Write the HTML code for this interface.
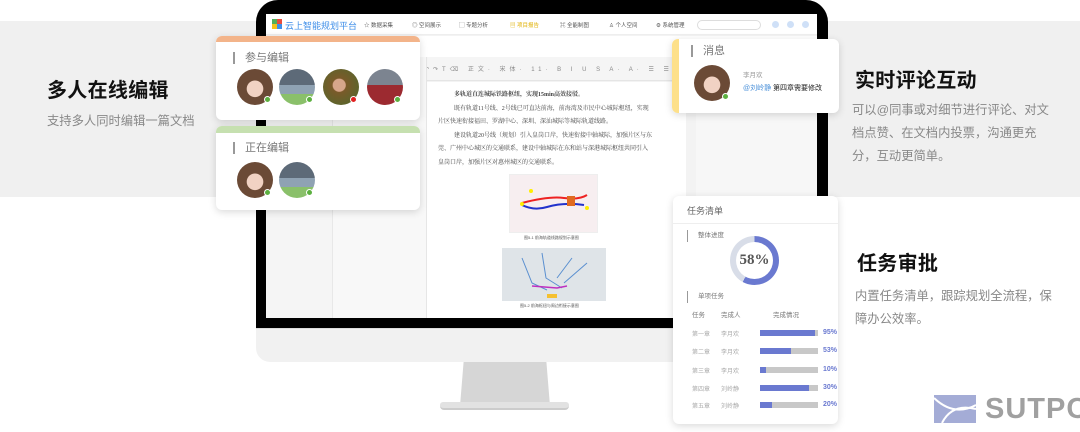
<!DOCTYPE html>
<html><head><meta charset="utf-8"><style>
*{margin:0;padding:0;box-sizing:border-box}
body{width:1080px;height:432px;background:#fff;position:relative;overflow:hidden;font-family:"Liberation Sans","Noto Sans CJK SC",sans-serif}
.abs{position:absolute}
.band{left:0;top:21px;width:1080px;height:176px;background:#f0f0f0}
h2{position:absolute;font-size:20px;font-weight:bold;color:#111;letter-spacing:0.3px;white-space:nowrap}
.p{position:absolute;font-size:12.3px;color:#888;line-height:23px;white-space:nowrap}
.card{position:absolute;background:#fff;border-radius:6px;box-shadow:0 2px 8px rgba(0,0,0,.15);overflow:hidden}
.ttl{position:absolute;font-size:11px;color:#777;padding-left:10px;border-left:2px solid #999;line-height:12px}
.av{position:absolute;width:36px;height:36px;border-radius:50%}
.dot{position:absolute;width:7px;height:7px;border-radius:50%;background:#5cb040;border:1px solid #fff}
.a1{background:radial-gradient(circle at 50% 55%,#f1d2c3 0 30%,#6b4a36 32% 100%)}
.a2{background:linear-gradient(#5d6a78 0 45%,#8fa2b3 45% 70%,#8ac06a 70%)}
.a3{background:radial-gradient(circle at 45% 45%,#d7a68b 0 22%,#7a5a2a 25%,#4c6a2c 100%)}
.a4{background:linear-gradient(#7c8490 0 45%,#9c2a30 45% 100%)}
.row{position:absolute;font-size:6px;color:#aaa}
.bar{position:absolute;height:6px;width:58px;background:#c8c8c8}
.bar i{display:block;height:100%;background:#6a79d0}
.pct{position:absolute;font-size:7px;color:#6a79d0;font-weight:bold}
.doc{position:absolute;font-size:6px;color:#444;line-height:13.5px;font-family:"Liberation Serif","Noto Serif CJK SC",serif;white-space:nowrap}
.nav{position:absolute;top:7px;font-size:5.5px;color:#555;white-space:nowrap}
</style></head><body>
<div class="abs band"></div>

<h2 style="left:47px;top:74px">多人在线编辑</h2>
<div class="p" style="left:47px;top:110px">支持多人同时编辑一篇文档</div>

<h2 style="left:855px;top:64px">实时评论互动</h2>
<div class="p" style="left:852px;top:99px">可以@同事或对细节进行评论、对文<br>档点赞、在文档内投票，沟通更充<br>分，互动更简单。</div>

<h2 style="left:857px;top:247px">任务审批</h2>
<div class="p" style="left:855px;top:285px">内置任务清单，跟踪规划全流程，保<br>障办公效率。</div>

<!-- monitor -->
<div class="abs" style="left:256px;top:0;width:572px;height:328px;background:#000;border-radius:22px 22px 0 0"></div>
<div class="abs" style="left:256px;top:328px;width:572px;height:34px;background:#f1f1f1;border-radius:0 0 14px 14px;border-top:1px solid #ddd"></div>
<div class="abs" style="left:460px;top:362px;width:90px;height:44px;background:#d6d6d6;clip-path:polygon(4% 0,96% 0,100% 100%,0 100%)"></div>
<div class="abs" style="left:440px;top:402px;width:129px;height:8px;background:#e2e2e2;border-radius:3px 3px 4px 4px;border-bottom:2px solid #ccc"></div>

<!-- screen -->
<div class="abs" style="left:266px;top:14px;width:551px;height:304px;background:#f3f3f3;overflow:hidden">
  <div class="abs" style="left:0;top:0;width:551px;height:21px;background:#fff;border-bottom:1px solid #eee"></div>
  <div class="abs" style="left:6px;top:5px;width:10px;height:10px;background:conic-gradient(#e94d3c 0 25%,#3e8ee8 0 50%,#f4c21a 0 75%,#51b05a 0)"></div>
  <div class="abs" style="left:19px;top:5px;font-size:9px;color:#3e8ee8;white-space:nowrap">云上智能规划平台</div>
  <div class="nav" style="left:98px">☆ 数据采集</div>
  <div class="nav" style="left:146px">◎ 空间展示</div>
  <div class="nav" style="left:193px">▢ 专题分析</div>
  <div class="nav" style="left:244px;color:#e0b000">▤ 项目报告</div>
  <div class="nav" style="left:294px">⌘ 全能制图</div>
  <div class="nav" style="left:343px">♙ 个人空间</div>
  <div class="nav" style="left:390px">⚙ 系统管理</div>
  <div class="abs" style="left:431px;top:6px;width:64px;height:10px;border:1px solid #ddd;border-radius:5px"></div>
  <div class="abs" style="left:506px;top:7px;width:7px;height:7px;border-radius:50%;background:#cfe0f7"></div>
  <div class="abs" style="left:521px;top:7px;width:7px;height:7px;border-radius:50%;background:#cfe0f7"></div>
  <div class="abs" style="left:536px;top:7px;width:7px;height:7px;border-radius:50%;background:#cfe0f7"></div>
  <div class="abs" style="left:0;top:22px;width:551px;height:21px;background:#fff"></div>
  <div class="abs" style="left:150px;top:43px;width:401px;height:24px;background:#f5f5f5;border-bottom:1px solid #e5e5e5;font-size:6px;color:#888;padding:7px 8px;white-space:nowrap;letter-spacing:4px">↶↷T⌫ 正文· 宋体· 11· B I U S A· A· ☰ ☰ ≡ ≡ ≡ ≡· 插入· 图</div>
  <div class="abs" style="left:0;top:43px;width:67px;height:261px;background:#f5f5f5;border-right:1px solid #e8e8e8"></div>
  <div class="abs" style="left:67px;top:43px;width:94px;height:261px;background:#f8f8f8;border-right:1px solid #e6e6e6"></div>
  <div class="abs" style="left:161px;top:68px;width:259px;height:236px;background:#fff"></div>
  <div class="doc" style="left:172px;top:75px;width:240px">
   <b style="padding-left:16px">多轨道直连城际铁路枢纽，实现15min高效接驳。</b><br>
   <span style="padding-left:16px">既有轨道11号线、2号线已可直达前海，前海湾及市民中心城际枢纽，实现</span><br>片区快速衔接福田、罗湖中心、深圳、深汕城际等城际轨道线路。<br>
   <span style="padding-left:16px">建设轨道20号线（规划）引入皇岗口岸，快速衔接中轴城际，加强片区与东</span><br>莞、广州中心城区的交通联系，建设中轴城际在东和站与深港城际枢纽共同引入<br>皇岗口岸，加强片区对惠州城区的交通联系。</div>
  <div class="abs" style="left:243px;top:160px;width:89px;height:59px;background:#f7eef0;border:1px solid #eee"></div>
  <svg class="abs" style="left:243px;top:160px" width="89" height="59"><path d="M13 29 Q40 22 55 24 T78 21" stroke="#e22" stroke-width="2" fill="none"/><path d="M13 31 Q25 37 38 33 Q55 28 75 31" stroke="#23c" stroke-width="2" fill="none"/><rect x="58" y="22" width="8" height="10" fill="#e06a20"/><circle cx="22" cy="17" r="2" fill="#fe0"/><circle cx="13" cy="30" r="2" fill="#fe0"/><circle cx="78" cy="34" r="2" fill="#fe0"/></svg>
  <div class="abs" style="left:258px;top:221px;font-size:4px;color:#555;white-space:nowrap">图5-1 前海轨道线路规划示意图</div>
  <div class="abs" style="left:236px;top:234px;width:104px;height:53px;background:#dfe4e8"></div>
  <svg class="abs" style="left:236px;top:234px" width="104" height="53"><path d="M20 10 L30 35 L45 42 M40 5 L44 30 L60 40 M70 10 L55 30 M85 15 L62 35" stroke="#5a8fd0" stroke-width="1" fill="none"/><path d="M30 38 L55 40 L65 38" stroke="#c030c0" stroke-width="1.5" fill="none"/><rect x="45" y="46" width="10" height="4" fill="#f5c030"/></svg>
  <div class="abs" style="left:254px;top:289px;font-size:4px;color:#555;white-space:nowrap">图5-2 前海枢纽与周边衔接示意图</div>
  <div class="abs" style="left:430px;top:43px;width:121px;height:261px;background:#f7f7f7"></div>
</div>

<!-- card 参与编辑 -->
<div class="card" style="left:216px;top:36px;width:204px;height:84px">
  <div class="abs" style="left:0;top:0;width:204px;height:6px;background:#f3b48a"></div>
  <div class="ttl" style="left:17px;top:16px">参与编辑</div>
  <div class="av a1" style="left:21px;top:33px"></div><div class="dot" style="left:48px;top:60px"></div>
  <div class="av a2" style="left:63px;top:33px"></div><div class="dot" style="left:90px;top:60px"></div>
  <div class="av a3" style="left:107px;top:33px"></div><div class="dot" style="left:134px;top:60px;background:#e02020"></div>
  <div class="av a4" style="left:151px;top:33px"></div><div class="dot" style="left:178px;top:60px"></div>
</div>
<!-- card 正在编辑 -->
<div class="card" style="left:216px;top:126px;width:204px;height:84px">
  <div class="abs" style="left:0;top:0;width:204px;height:7px;background:#c6e0b0"></div>
  <div class="ttl" style="left:17px;top:16px">正在编辑</div>
  <div class="av a1" style="left:21px;top:36px"></div><div class="dot" style="left:48px;top:63px"></div>
  <div class="av a2" style="left:63px;top:36px"></div><div class="dot" style="left:90px;top:63px"></div>
</div>
<!-- message -->
<div class="card" style="left:672px;top:39px;width:167px;height:74px">
  <div class="abs" style="left:0;top:0;width:7px;height:74px;background:#fde08a"></div>
  <div class="ttl" style="left:19px;top:6px;font-size:11px">消息</div>
  <div class="av a1" style="left:22px;top:26px"></div><div class="dot" style="left:50px;top:54px"></div>
  <div class="abs" style="left:71px;top:30px;font-size:6.5px;color:#999">李月欢</div>
  <div class="abs" style="left:71px;top:44px;font-size:7px;color:#222;white-space:nowrap"><span style="color:#4a90d9">@刘岭静</span> 第四章需要修改</div>
</div>
<!-- tasks -->
<div class="card" style="left:673px;top:196px;width:165px;height:228px">
  <div class="abs" style="left:14px;top:8px;font-size:9px;color:#666">任务清单</div>
  <div class="abs" style="left:0;top:27px;width:165px;height:1px;background:#eee"></div>
  <div class="ttl" style="left:14px;top:34px;font-size:6.5px;border-left-width:1px">整体进度</div>
  <div class="abs" style="left:57px;top:40px;width:49px;height:49px;border-radius:50%;background:conic-gradient(#6a79d0 0 58%,#d8dde8 0)"></div>
  <div class="abs" style="left:63px;top:46px;width:37px;height:37px;border-radius:50%;background:#fff;font:bold 15px 'Liberation Serif',serif;color:#555;text-align:center;line-height:37px">58%</div>
  <div class="ttl" style="left:14px;top:95px;font-size:6.5px;border-left-width:1px">单项任务</div>
  <div class="row" style="left:19px;top:113px;font-size:6.5px;color:#777">任务</div>
  <div class="row" style="left:48px;top:113px;font-size:6.5px;color:#777">完成人</div>
  <div class="row" style="left:100px;top:113px;font-size:6.5px;color:#777">完成情况</div>
  <div class="row" style="left:19px;top:133px">第一章</div><div class="row" style="left:48px;top:133px">李月欢</div><div class="bar" style="left:87px;top:134px"><i style="width:95%"></i></div><div class="pct" style="left:150px;top:133px">95%</div>
  <div class="row" style="left:19px;top:151px">第二章</div><div class="row" style="left:48px;top:151px">李月欢</div><div class="bar" style="left:87px;top:152px"><i style="width:53%"></i></div><div class="pct" style="left:150px;top:151px">53%</div>
  <div class="row" style="left:19px;top:170px">第三章</div><div class="row" style="left:48px;top:170px">李月欢</div><div class="bar" style="left:87px;top:171px"><i style="width:10%"></i></div><div class="pct" style="left:150px;top:170px">10%</div>
  <div class="row" style="left:19px;top:188px">第四章</div><div class="row" style="left:48px;top:188px">刘岭静</div><div class="bar" style="left:87px;top:189px"><i style="width:85%"></i></div><div class="pct" style="left:150px;top:188px">30%</div>
  <div class="row" style="left:19px;top:205px">第五章</div><div class="row" style="left:48px;top:205px">刘岭静</div><div class="bar" style="left:87px;top:206px"><i style="width:20%"></i></div><div class="pct" style="left:150px;top:205px">20%</div>
</div>

<!-- logo -->
<svg class="abs" style="left:934px;top:395px" width="42" height="28"><rect x="0" y="0" width="42" height="28" fill="#a4acd6"/><path d="M0 3 Q20 22 42 10 M8 28 Q18 8 42 14" stroke="#fff" stroke-width="2" fill="none"/></svg>
<div class="abs" style="left:985px;top:393px;font-size:29px;font-weight:bold;color:#a0a0a0;letter-spacing:1px">SUTPC</div>
</body></html>
